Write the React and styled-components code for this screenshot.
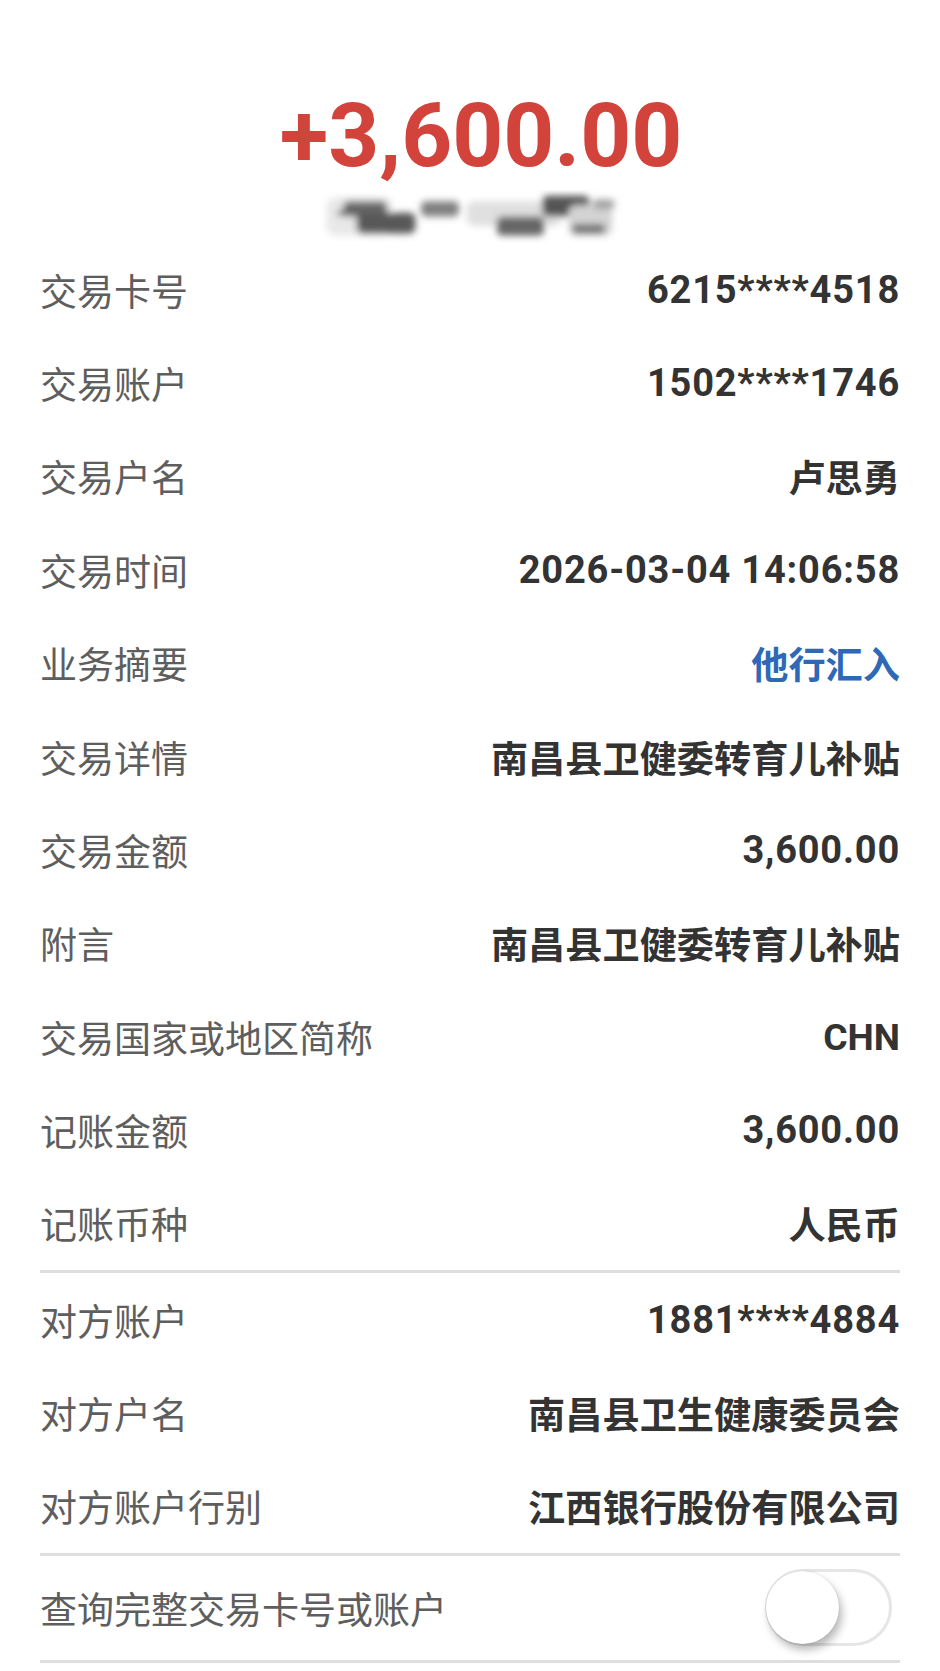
import React from 'react';
import styled, { createGlobalStyle } from 'styled-components';

const GlobalStyle = createGlobalStyle`
  html, body {
    margin: 0;
    padding: 0;
    background: #fff;
  }
  body {
    font-family: Roboto, "Noto Sans CJK SC", sans-serif;
  }
`;

const Page = styled.div`
  width: 940px;
  min-height: 1671px;
  background: #fff;
  padding: 0 40px;
  box-sizing: border-box;
`;

const Header = styled.header`
  height: 243px;
  display: flex;
  flex-direction: column;
  align-items: center;
  padding-top: 86px;
  box-sizing: border-box;
`;

const Amount = styled.div`
  font-family: Roboto, sans-serif;
  font-weight: 700;
  font-size: 89px;
  line-height: 100px;
  color: #d2433b;
  margin-left: 22px;
`;

const BlurName = styled.svg`
  display: block;
  margin-top: 4px;
  margin-left: 10px;
`;

const List = styled.div`
  display: flex;
  flex-direction: column;
`;

const Row = styled.div`
  height: ${p => p.$h || 93.4}px;
  display: flex;
  align-items: center;
  justify-content: space-between;
  border-bottom: ${p => (p.$line ? '3px solid #dedede' : 'none')};
  box-sizing: border-box;
`;

const Label = styled.span`
  font-family: "Noto Sans CJK SC", sans-serif;
  font-size: 37px;
  color: #5e5e5e;
`;

const Value = styled.span`
  font-family: Roboto, "Noto Sans CJK SC", sans-serif;
  font-weight: 700;
  font-size: ${p => (p.$num ? '38px' : '37.2px')};
  letter-spacing: ${p => (p.$num ? '0.8px' : '0')};
  color: ${p => (p.$blue ? '#2e68b6' : '#333')};
`;

const Switch = styled.div`
  width: 127px;
  height: 77px;
  border-radius: 39px;
  border: 3px solid #e6e6e6;
  box-sizing: border-box;
  display: flex;
  align-items: center;
  margin-right: 8px;
`;

const Knob = styled.div`
  width: 73px;
  height: 73px;
  border-radius: 50%;
  background: #fff;
  box-shadow: 3px 6px 8px rgba(0, 0, 0, 0.28), 0 0 2px rgba(0, 0, 0, 0.12);
  margin-left: -2px;
`;

const isNum = s => /^[\d\-:*,. ]+$/.test(s);

const rows = [
  ['交易卡号', '6215****4518'],
  ['交易账户', '1502****1746'],
  ['交易户名', '卢思勇'],
  ['交易时间', '2026-03-04 14:06:58'],
  ['业务摘要', '他行汇入', true],
  ['交易详情', '南昌县卫健委转育儿补贴'],
  ['交易金额', '3,600.00'],
  ['附言', '南昌县卫健委转育儿补贴'],
  ['交易国家或地区简称', 'CHN'],
  ['记账金额', '3,600.00'],
  ['记账币种', '人民币'],
];

const peer = [
  ['对方账户', '1881****4884'],
  ['对方户名', '南昌县卫生健康委员会'],
  ['对方账户行别', '江西银行股份有限公司'],
];

export default function App() {
  return (
    <>
      <GlobalStyle />
      <Page>
        <Header>
          <Amount>+3,600.00</Amount>
          <BlurName width="330" height="56" viewBox="0 0 330 56">
            <defs>
              <filter id="b" x="-20%" y="-50%" width="140%" height="200%">
                <feGaussianBlur stdDeviation="4" />
              </filter>
            </defs>
            <g filter="url(#b)">
              <rect x="8" y="8" width="70" height="40" rx="10" fill="#e8e8e8" />
              <rect x="26" y="12" width="46" height="16" rx="5" fill="#666" />
              <rect x="40" y="24" width="62" height="22" rx="6" fill="#585858" />
              <rect x="20" y="22" width="14" height="5" fill="#555" />
              <rect x="108" y="12" width="40" height="16" rx="5" fill="#808080" />
              <rect x="156" y="12" width="100" height="26" rx="8" fill="#e0e0e0" />
              <rect x="188" y="28" width="50" height="20" rx="5" fill="#666" />
              <rect x="236" y="6" width="50" height="22" rx="6" fill="#555" />
              <rect x="264" y="16" width="46" height="32" rx="8" fill="#d4d4d4" />
              <rect x="268" y="36" width="34" height="10" rx="3" fill="#707070" />
              <rect x="290" y="10" width="22" height="10" rx="3" fill="#a0a0a0" />
            </g>
          </BlurName>
        </Header>
        <List>
          {rows.map(([k, v, blue], i) => (
            <Row key={k} $line={i === rows.length - 1} $h={i === rows.length - 1 ? 96 : 93.4}>
              <Label>{k}</Label>
              <Value $blue={blue} $num={isNum(v)}>{v}</Value>
            </Row>
          ))}
          {peer.map(([k, v], i) => (
            <Row key={k} $line={i === peer.length - 1} $h={i === peer.length - 1 ? 96 : 93.4}>
              <Label>{k}</Label>
              <Value $num={isNum(v)}>{v}</Value>
            </Row>
          ))}
          <Row $line $h={107}>
            <Label>查询完整交易卡号或账户</Label>
            <Switch>
              <Knob />
            </Switch>
          </Row>
        </List>
      </Page>
    </>
  );
}
